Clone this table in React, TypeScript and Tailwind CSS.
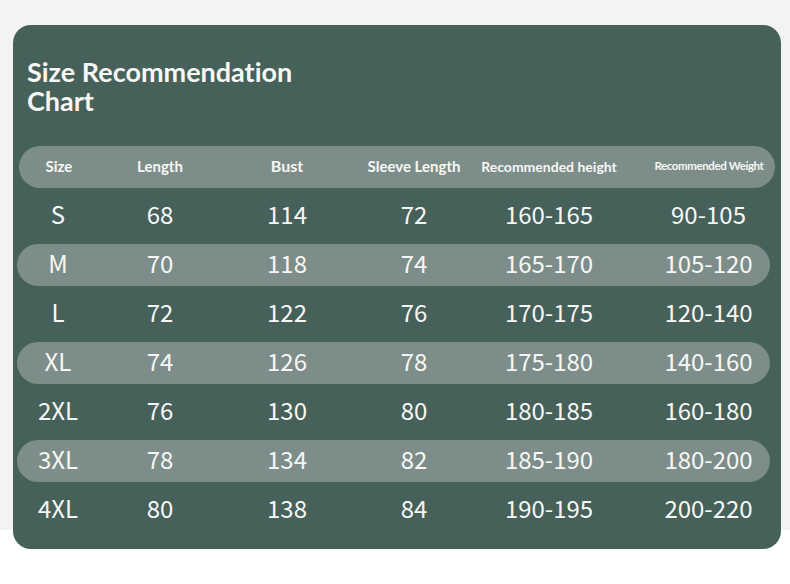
const HEADERS = [
  { label: 'Size', cls: 'text-[15px]' },
  { label: 'Length', cls: 'text-[15px]' },
  { label: 'Bust', cls: 'text-[16px]' },
  { label: 'Sleeve Length', cls: 'text-[15px]' },
  { label: 'Recommended height', cls: 'text-[14px]' },
  { label: 'Recommended Weight', cls: 'text-[11.5px] tracking-[-0.4px] pl-[20px]' },
]

const ROWS = [
  ['S', '68', '114', '72', '160-165', '90-105'],
  ['M', '70', '118', '74', '165-170', '105-120'],
  ['L', '72', '122', '76', '170-175', '120-140'],
  ['XL', '74', '126', '78', '175-180', '140-160'],
  ['2XL', '76', '130', '80', '180-185', '160-180'],
  ['3XL', '78', '134', '82', '185-190', '180-200'],
  ['4XL', '80', '138', '84', '190-195', '200-220'],
]

export default function App() {
  return (
    <div className="w-[790px] h-[584px] bg-[linear-gradient(#f3f3f3_530px,#ffffff_530px)] pt-[25px] pl-[13px]">
      <div className="w-[768px] h-[524px] rounded-[18px] bg-[#46605a] text-[#f7f7f5]">
        <h1 className="pt-[32px] pl-[14px] text-[27px] leading-[29px] font-bold font-['Lato',sans-serif] [font-variant-ligatures:none]">
          Size Recommendation
          <br />
          Chart
        </h1>

        <div className="mt-[31px] flex flex-col gap-[7px]">
          <div className="ml-[6px] w-[756px] h-[42px] rounded-full bg-[#7d8e8a] grid grid-cols-[80px_122px_132px_122px_148px_1fr] items-center font-bold font-['Lato',sans-serif] [font-variant-ligatures:none]">
            {HEADERS.map((h) => (
              <div key={h.label} className={'text-center whitespace-nowrap pb-[2px] ' + h.cls}>
                {h.label}
              </div>
            ))}
          </div>

          {ROWS.map((row, i) => (
            <div
              key={row[0]}
              className={
                'ml-[4px] w-[753px] h-[42px] rounded-full grid grid-cols-[82px_122px_132px_122px_148px_1fr] items-center text-[24px] font-["Noto_Sans_CJK_SC","Noto_Sans",sans-serif] ' +
                (i % 2 === 1 ? 'bg-[#7d8e8a]' : '')
              }
            >
              {row.map((cell, j) => (
                <div
                  key={j}
                  className={'text-center whitespace-nowrap pb-[4px] ' + (j === 5 ? 'pl-[24px]' : '')}
                >
                  {cell}
                </div>
              ))}
            </div>
          ))}
        </div>
      </div>
    </div>
  )
}
